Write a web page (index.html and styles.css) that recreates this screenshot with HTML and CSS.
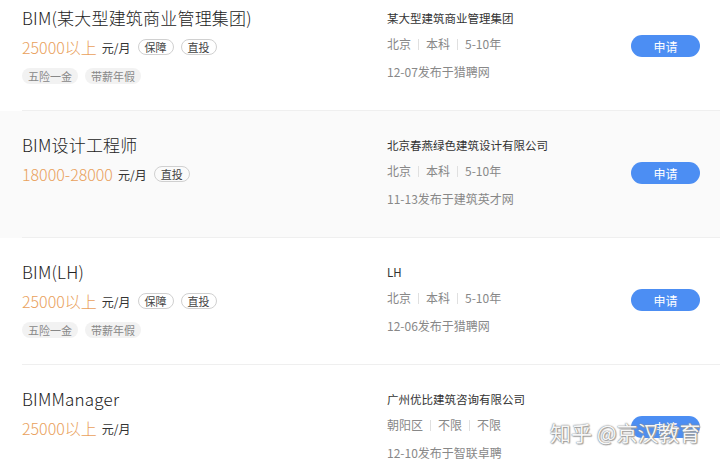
FILE: index.html
```html
<!DOCTYPE html>
<html lang="zh">
<head>
<meta charset="utf-8">
<link rel="stylesheet" href="styles.css">
</head>
<body>
<div class="list">
  <div class="job">
    <div class="main">
      <div class="title">BIM(某大型建筑商业管理集团)</div>
      <div class="salary"><span class="amount">25000以上</span><span class="unit">元/月</span><span class="tag">保障</span><span class="tag">直投</span></div>
      <div class="perks"><span class="perk">五险一金</span><span class="perk">带薪年假</span></div>
    </div>
    <div class="info">
      <div class="company">某大型建筑商业管理集团</div>
      <div class="meta">北京<i class="sep"></i>本科<i class="sep"></i>5-10年</div>
      <div class="date">12-07发布于猎聘网</div>
    </div>
    <button class="apply">申请</button>
  </div>

  <div class="job hover">
    <div class="main">
      <div class="title">BIM设计工程师</div>
      <div class="salary"><span class="amount">18000-28000</span><span class="unit">元/月</span><span class="tag">直投</span></div>
    </div>
    <div class="info">
      <div class="company">北京春燕绿色建筑设计有限公司</div>
      <div class="meta">北京<i class="sep"></i>本科<i class="sep"></i>5-10年</div>
      <div class="date">11-13发布于建筑英才网</div>
    </div>
    <button class="apply">申请</button>
  </div>

  <div class="job">
    <div class="main">
      <div class="title">BIM(LH)</div>
      <div class="salary"><span class="amount">25000以上</span><span class="unit">元/月</span><span class="tag">保障</span><span class="tag">直投</span></div>
      <div class="perks"><span class="perk">五险一金</span><span class="perk">带薪年假</span></div>
    </div>
    <div class="info">
      <div class="company">LH</div>
      <div class="meta">北京<i class="sep"></i>本科<i class="sep"></i>5-10年</div>
      <div class="date">12-06发布于猎聘网</div>
    </div>
    <button class="apply">申请</button>
  </div>

  <div class="job">
    <div class="main">
      <div class="title">BIMManager</div>
      <div class="salary"><span class="amount">25000以上</span><span class="unit">元/月</span></div>
    </div>
    <div class="info">
      <div class="company">广州优比建筑咨询有限公司</div>
      <div class="meta">朝阳区<i class="sep"></i>不限<i class="sep"></i>不限</div>
      <div class="date">12-10发布于智联卓聘</div>
    </div>
    <button class="apply">申请</button>
  </div>
</div>
<div class="watermark">知乎 @京汉教育</div>
</body>
</html>
```

FILE: styles.css
```css
* { box-sizing: border-box; }
html, body {
  margin: 0;
  padding: 0;
  width: 720px;
  height: 462px;
  overflow: hidden;
  background: #fff;
  font-family: "Noto Sans CJK SC", "Noto Sans", sans-serif;
  color: #333;
}
.list {
  margin-top: -16px;
}
.job {
  display: flex;
  align-items: flex-start;
  height: 127px;
  padding: 22px 20px 0 22px;
  position: relative;
}
.job::after {
  content: "";
  position: absolute;
  left: 22px;
  right: 0;
  bottom: 0;
  height: 1px;
  background: #efefef;
}
.job.hover {
  background: #fafafa;
}
.main {
  width: 365px;
  flex: none;
}
.title {
  font-size: 17px;
  line-height: 24px;
  font-weight: 300;
  color: #222;
  letter-spacing: 0.2px;
}
.salary {
  display: flex;
  align-items: center;
  margin-top: 5px;
  height: 24px;
}
.amount {
  font-size: 16px;
  font-weight: 300;
  color: #e9a15c;
  margin-right: 5px;
}
.unit {
  font-size: 12px;
  color: #333;
  margin-right: 7px;
}
.tag {
  font-size: 11px;
  line-height: 14px;
  padding: 0 6px;
  border: 1px solid #d0d0d0;
  border-radius: 8px;
  color: #444;
  margin-right: 7px;
}
.perks {
  display: flex;
  margin-top: 9px;
}
.perk {
  font-size: 11px;
  line-height: 16px;
  padding: 0 6px;
  border-radius: 8px;
  background: #f2f2f2;
  color: #888;
  margin-right: 7px;
}
.info {
  flex: 1;
}
.company {
  font-size: 11.5px;
  line-height: 24px;
  color: #333;
}
.meta {
  display: flex;
  align-items: center;
  margin-top: 4px;
  font-size: 12px;
  line-height: 20px;
  color: #888;
}
.sep {
  display: inline-block;
  width: 1px;
  height: 11px;
  background: #e0e0e0;
  margin: 0 7px;
}
.date {
  margin-top: 8px;
  font-size: 12px;
  line-height: 20px;
  color: #888;
}
.apply {
  flex: none;
  width: 69px;
  height: 22px;
  margin-top: 29px;
  border: none;
  border-radius: 11px;
  background: #4c8ef3;
  color: #fff;
  font-family: inherit;
  font-size: 12px;
  padding: 0;
}
.watermark {
  position: absolute;
  left: 550px;
  top: 418px;
  white-space: nowrap;
  font-size: 21px;
  line-height: 28px;
  color: rgba(255, 255, 255, 0.95);
  text-shadow: 0 0 1px #777, 0 0 2px #999, 1px 1px 1px #aaa;
}
```
